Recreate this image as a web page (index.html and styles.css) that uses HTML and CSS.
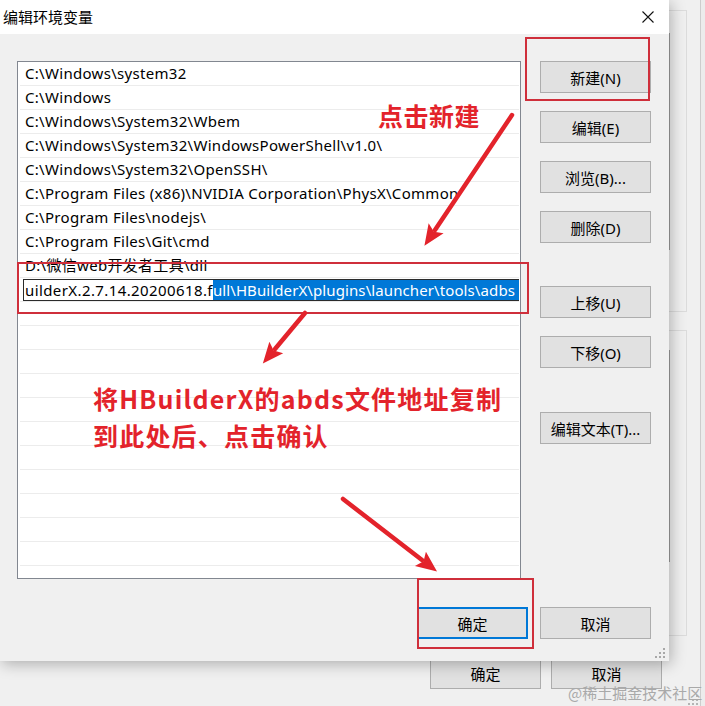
FILE: index.html
```
<!DOCTYPE html>
<html lang="zh-CN">
<head>
<meta charset="utf-8">
<title>编辑环境变量</title>
<link rel="stylesheet" href="styles.css">
</head>
<body>
<div class="desktop">
  <div class="back-window">
    <div class="group g1"><div class="back-list l1"></div></div>
    <div class="group g2"><div class="back-list l2"></div></div>
    <div class="back-footer">
      <div class="btn">确定</div>
      <div class="btn">取消</div>
    </div>
    <svg class="grip back-grip" width="10" height="10" viewBox="0 0 10 10"><g fill="#b4b4b4"><rect x="8" y="0" width="2" height="2"/><rect x="4" y="4" width="2" height="2"/><rect x="8" y="4" width="2" height="2"/><rect x="0" y="8" width="2" height="2"/><rect x="4" y="8" width="2" height="2"/><rect x="8" y="8" width="2" height="2"/></g></svg>
  </div>

  <div class="dialog">
    <div class="titlebar">
      <span class="title">编辑环境变量</span>
      <svg class="close" width="12" height="12" viewBox="0 0 12 12"><path d="M0.5 0.5 L11.5 11.5 M11.5 0.5 L0.5 11.5" stroke="#111" stroke-width="1.1" fill="none"/></svg>
    </div>
    <div class="dlg-body">
      <div class="main">
        <div class="listbox">
          <div class="row">C:\Windows\system32</div>
          <div class="row">C:\Windows</div>
          <div class="row">C:\Windows\System32\Wbem</div>
          <div class="row">C:\Windows\System32\WindowsPowerShell\v1.0\</div>
          <div class="row">C:\Windows\System32\OpenSSH\</div>
          <div class="row">C:\Program Files (x86)\NVIDIA Corporation\PhysX\Common</div>
          <div class="row">C:\Program Files\nodejs\</div>
          <div class="row">C:\Program Files\Git\cmd</div>
          <div class="row">D:\微信web开发者工具\dll</div>
          <div class="row edit-row"><div class="edit"><span class="plain">uilderX.2.7.14.20200618.f</span><span class="sel">ull\HBuilderX\plugins\launcher\tools\adbs</span></div></div>
          <div class="row"></div>
          <div class="row"></div>
          <div class="row"></div>
          <div class="row"></div>
          <div class="row"></div>
          <div class="row"></div>
          <div class="row"></div>
          <div class="row"></div>
          <div class="row"></div>
          <div class="row"></div>
          <div class="row"></div>
          <div class="row"></div>
        </div>
        <div class="side">
          <div class="btn">新建(N)</div>
          <div class="btn">编辑(E)</div>
          <div class="btn">浏览(B)...</div>
          <div class="btn">删除(D)</div>
          <div class="btn gap-lg">上移(U)</div>
          <div class="btn">下移(O)</div>
          <div class="btn gap-xl">编辑文本(T)...</div>
        </div>
      </div>
      <div class="footer">
        <div class="btn default">确定</div>
        <div class="btn">取消</div>
      </div>
      <svg class="grip dlg-grip" width="10" height="10" viewBox="0 0 10 10"><g fill="#a8a8a8"><rect x="8" y="0" width="2" height="2"/><rect x="4" y="4" width="2" height="2"/><rect x="8" y="4" width="2" height="2"/><rect x="0" y="8" width="2" height="2"/><rect x="4" y="8" width="2" height="2"/><rect x="8" y="8" width="2" height="2"/></g></svg>
    </div>
  </div>

  <div class="mark box-new"></div>
  <div class="mark box-edit"></div>
  <div class="mark box-ok"></div>
  <div class="note note-new">点击新建</div>
  <div class="note note-copy">将HBuilderX的abds文件地址复制<br>到此处后、点击确认</div>
  <svg class="arrows" width="705" height="706" viewBox="0 0 705 706">
    <defs>
      <marker id="head" markerUnits="userSpaceOnUse" markerWidth="22" markerHeight="20" refX="2" refY="10" orient="auto">
        <path d="M0 1 L21 10 L0 19 L4 10 Z" fill="#e3232b"/>
      </marker>
    </defs>
    <g stroke="#e3232b" stroke-width="4.5" stroke-linecap="round" fill="none">
      <line x1="512" y1="115" x2="435" y2="230" marker-end="url(#head)"/>
      <line x1="305" y1="313" x2="275" y2="349" marker-end="url(#head)"/>
      <line x1="343" y1="499" x2="422" y2="560" marker-end="url(#head)"/>
    </g>
  </svg>
  <div class="watermark">@稀土掘金技术社区</div>
</div>
</body>
</html>
```
FILE: styles.css
```
* { box-sizing: border-box; }
html, body { margin: 0; padding: 0; }
body {
  width: 705px;
  height: 706px;
  overflow: hidden;
  background: #ececec;
  font-family: "Noto Sans", "Noto Sans CJK SC", sans-serif;
  font-size: 15px;
  color: #000;
}
.desktop {
  position: relative;
  width: 705px;
  height: 706px;
}

/* window behind */
.back-window {
  position: absolute;
  left: 0;
  top: 0;
  width: 701px;
  height: 706px;
  background: #f0f0f0;
  border-right: 1px solid #cdcdcd;
  display: flex;
  flex-direction: column;
  align-items: flex-end;
  padding-right: 13px;
}
.group {
  width: 400px;
  border: 1px solid #dcdcdc;
  display: flex;
  flex-direction: column;
  align-items: flex-end;
  padding-right: 16px;
}
.g1 { margin-top: 10px; height: 302px; }
.g2 { margin-top: 18px; height: 306px; }
.back-list { width: 300px; border-right: 1px solid #9c9c9c; }
.l1 { margin-top: 22px; height: 217px; }
.l2 { margin-top: 19px; height: 212px; }
.back-footer {
  margin-top: 21px;
  display: flex;
  gap: 10px;
  margin-right: 25px;
}
.back-grip { position: absolute; right: 2px; bottom: 1px; }

/* dialog */
.dialog {
  position: absolute;
  left: 0;
  top: 0;
  width: 669px;
  height: 661px;
  background: #f0f0f0;
  box-shadow: 2px 3px 14px rgba(0, 0, 0, 0.28);
  display: flex;
  flex-direction: column;
}
.titlebar {
  height: 34px;
  background: #fff;
  display: flex;
  align-items: center;
  justify-content: space-between;
  padding: 0 15px 0 3px;
}
.title { font-size: 15px; line-height: 20px; }
.close { display: block; }
.dlg-body {
  position: relative;
  flex: 1;
  display: flex;
  flex-direction: column;
  padding: 27px 18px 0 17px;
}
.main {
  display: flex;
  gap: 19px;
  height: 518px;
}
.listbox {
  width: 504px;
  height: 518px;
  background: #fff;
  border: 1px solid #828790;
  padding: 0 1px 0 2px;
  overflow: hidden;
}
.row {
  height: 24px;
  line-height: 23px;
  border-bottom: 1px solid #ececec;
  padding-left: 5px;
  white-space: nowrap;
  overflow: hidden;
  letter-spacing: 0.3px;
}
.edit-row { padding-left: 3px; padding-top: 1px; }
.edit {
  height: 22px;
  margin-right: -1px;
  border: 1px solid #2b2b2b;
  background: #fff;
  display: flex;
  align-items: stretch;
  line-height: 20px;
  padding-left: 1px;
  overflow: hidden;
}
.plain { letter-spacing: 0.4px; white-space: nowrap; }
.sel {
  background: #0078d7;
  color: #fff;
  flex: 1;
  white-space: nowrap;
  letter-spacing: 0.1px;
}
.side {
  display: flex;
  flex-direction: column;
  gap: 18px;
  width: 111px;
}
.btn {
  width: 111px;
  height: 32px;
  background: #e1e1e1;
  border: 1px solid #adadad;
  display: flex;
  align-items: center;
  justify-content: center;
  font-size: 15px;
  flex: none;
}
.side .btn.gap-lg { margin-top: 25px; }
.side .btn.gap-xl { margin-top: 26px; }
.footer {
  margin-top: 28px;
  display: flex;
  justify-content: flex-end;
  gap: 12px;
}
.btn.default { border: 2px solid #0078d7; }
.dlg-grip { position: absolute; right: 4px; bottom: 3px; }

/* annotations */
.mark {
  position: absolute;
  border: 2px solid #cf2f3b;
}
.box-new { left: 525px; top: 37px; width: 125px; height: 64px; }
.box-edit { left: 17px; top: 262px; width: 512px; height: 52px; }
.box-ok { left: 417px; top: 578px; width: 117px; height: 71px; }
.note {
  position: absolute;
  color: #e3232b;
  font-family: "Noto Sans CJK SC", sans-serif;
  font-weight: 700;
  font-size: 25px;
  white-space: nowrap;
}
.note-new { left: 378px; top: 97px; line-height: 36px; letter-spacing: 0.5px; }
.note-copy { left: 93px; top: 380px; line-height: 37px; letter-spacing: 1.2px; }
.arrows { position: absolute; left: 0; top: 0; }
.watermark {
  position: absolute;
  left: 568px;
  top: 682px;
  font-family: "Noto Sans CJK SC", sans-serif;
  font-size: 15px;
  line-height: 22px;
  color: #a9a9a9;
  white-space: nowrap;
}
```
